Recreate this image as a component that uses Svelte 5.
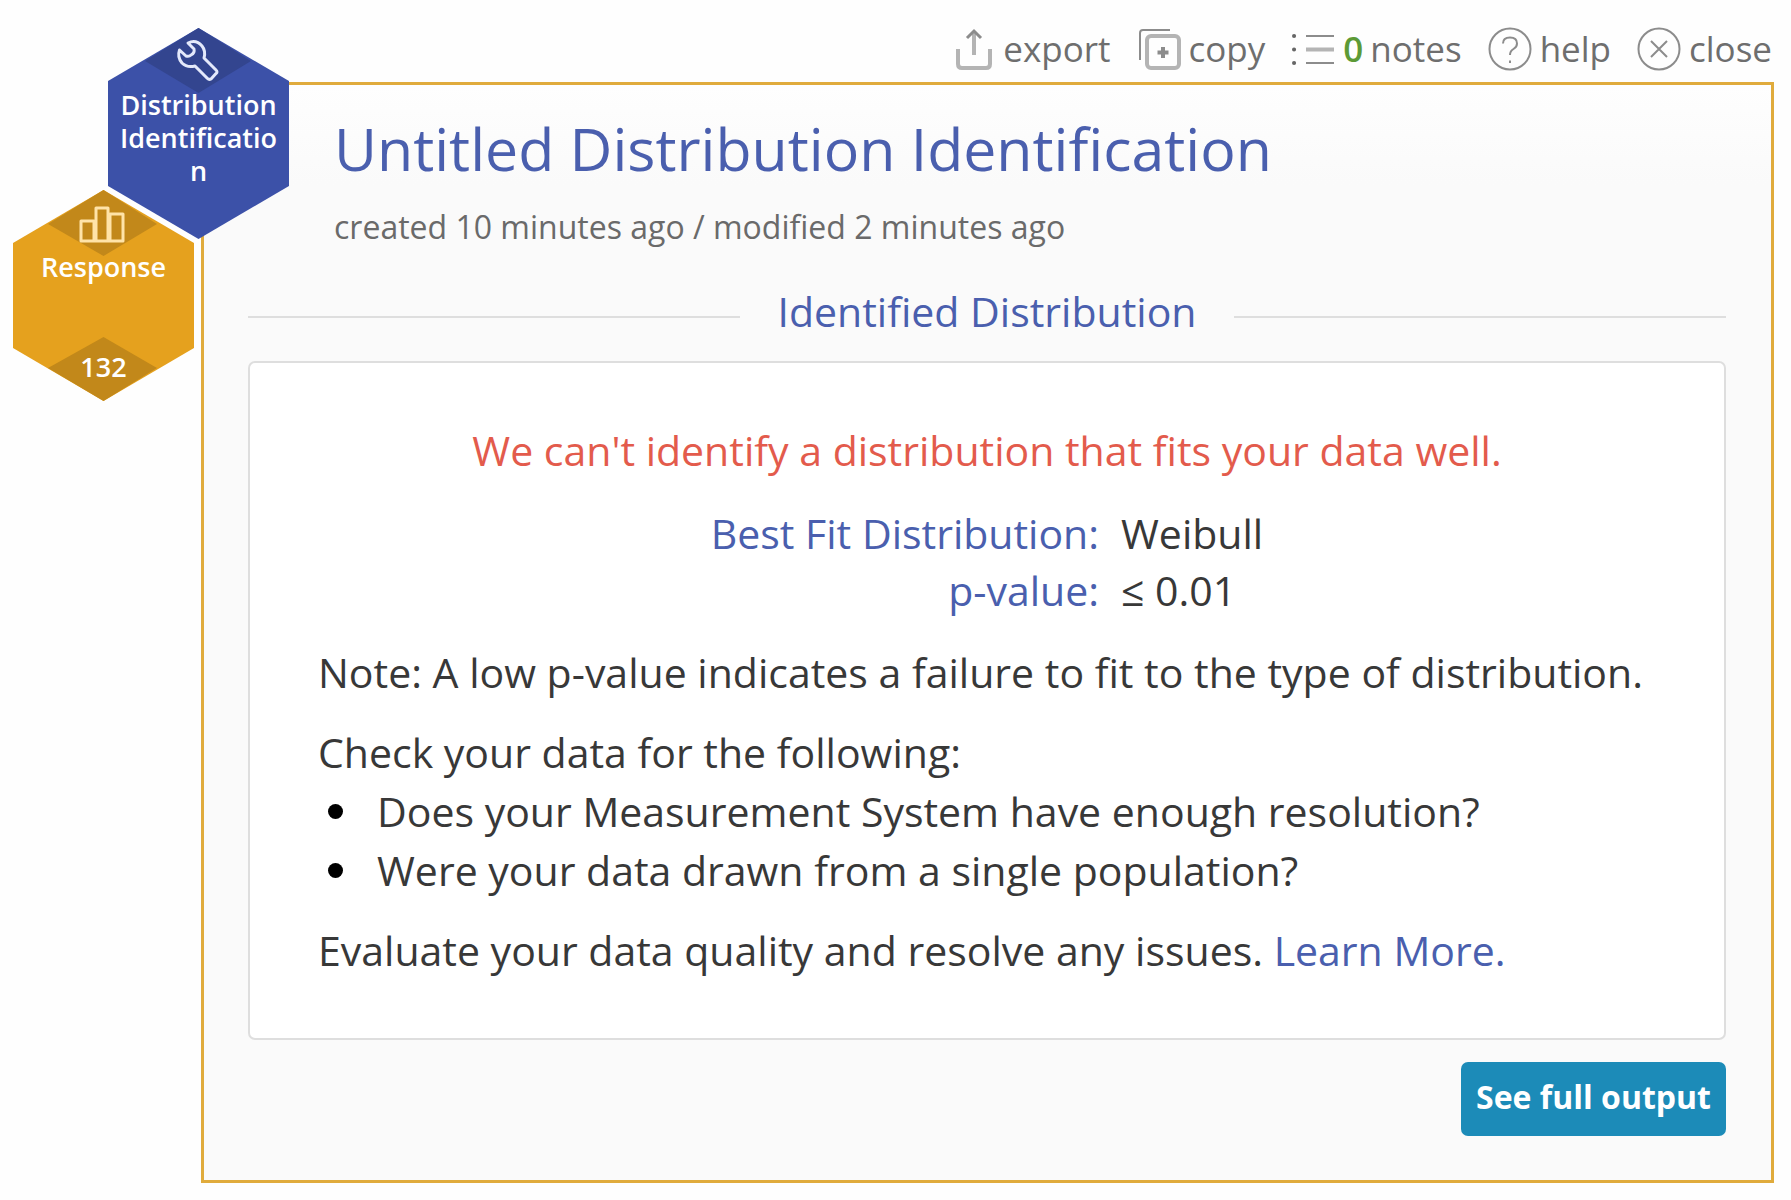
<script lang="ts">
	const tools = [
		{ id: 'export', label: 'export' },
		{ id: 'copy', label: 'copy' },
		{ id: 'notes', label: 'notes', count: 0 },
		{ id: 'help', label: 'help' },
		{ id: 'close', label: 'close' }
	];

	const results = [
		{ name: 'Best Fit Distribution:', value: 'Weibull' },
		{ name: 'p-value:', value: '≤ 0.01' }
	];

	const checks = [
		'Does your Measurement System have enough resolution?',
		'Were your data drawn from a single population?'
	];
</script>

<div class="page">
	<nav class="toolbar">
		{#each tools as tool (tool.id)}
			<button type="button" class="tool">
				<svg class="tool-icon" viewBox="0 0 44 44" aria-hidden="true">
					{#if tool.id === 'export'}
						<path class="soft" d="M7 22v15q0 4 4 4h24q4 0 4-4V22M23 28V5" />
						<path class="head" d="M16 11l7-7 7 7" />
					{:else if tool.id === 'copy'}
						<path d="M3 33V6q0-3 3-3h27" />
						<rect class="soft" x="10" y="9" width="32" height="32" rx="4" />
						<path class="plus" d="M26 20v11M20.500 25.500h11" />
					{:else if tool.id === 'notes'}
						<path d="M15 9h28M15 36h28" />
						<path class="soft" d="M15 22.500h28" />
						<path class="dots" d="M3 9h.1M3 22.500h.1M3 36h.1" />
					{:else if tool.id === 'help'}
						<circle cx="22" cy="22" r="20.500" />
						<path d="M15 16.500q0-6 7-6t7 6q0 3.500-3.500 5.500-3.500 2-3.500 6M22 33.500v2.500" />
					{:else}
						<circle cx="22" cy="22" r="20.500" />
						<path d="M14 14l16 16M30 14L14 30" />
					{/if}
				</svg>
				<span class="tool-label">
					{#if tool.count !== undefined}<b>{tool.count}</b>{/if}
					{tool.label}
				</span>
			</button>
		{/each}
	</nav>

	<aside class="badges">
		<div class="hex hex-tool">
			<svg class="hex-shape" viewBox="0 0 181 211" aria-hidden="true">
				<path class="fill" d="M90.500 0L181 53v105l-90.500 53L0 158V53z" />
				<path class="shade" d="M90.500 0L143 33 90.500 65 37 33z" />
				<path
					class="glyph"
					d="M80 15q8-4 14 3 4 5 2 12l12 12q2 2 0 3.500l-5 5.500q-2 1-3.500-.5L87 38q-8 2-13-3-5-6-2.500-13l6.500 6q3 1 5-1 4-2 3-6z"
				/>
			</svg>
			<span class="hex-label">Distribution Identification</span>
		</div>
		<div class="hex hex-data">
			<svg class="hex-shape" viewBox="0 0 181 211" aria-hidden="true">
				<path class="fill" d="M90.500 0L181 53v105l-90.500 53L0 158V53z" />
				<path class="shade" d="M90.500 0L144 34 90.500 66 35 34z" />
				<path class="shade" d="M90.500 147L144 178l-53.500 33L35 178z" />
				<path class="glyph" d="M68 31h13v20H68zM83 18h12v33H83zM97 24h13v27H97z" />
			</svg>
			<span class="hex-label">Response</span>
			<span class="hex-count">132</span>
		</div>
	</aside>

	<main class="card">
		<header>
			<h1>Untitled Distribution Identification</h1>
			<p class="dates">created 10 minutes ago / modified 2 minutes ago</p>
		</header>

		<h2>Identified Distribution</h2>

		<section class="panel">
			<p class="warning">We can't identify a distribution that fits your data well.</p>
			<table>
				<tbody>
					{#each results as row (row.name)}
						<tr>
							<th scope="row">{row.name}</th>
							<td>{row.value}</td>
						</tr>
					{/each}
				</tbody>
			</table>
			<p>Note: A low p-value indicates a failure to fit to the type of distribution.</p>
			<p>Check your data for the following:</p>
			<ul>
				{#each checks as check (check)}
					<li>{check}</li>
				{/each}
			</ul>
			<p>Evaluate your data quality and resolve any issues. <a href="#learn">Learn More.</a></p>
		</section>

		<div class="actions">
			<button type="button" class="primary">See full output</button>
		</div>
	</main>
</div>

<style>
	:global(body) {
		margin: 0;
		background: #fefefe;
	}

	.page {
		position: relative;
		padding: 27px 17px 17px 201px;
		font-family: 'Open Sans', 'Noto Sans', sans-serif;
		color: #383838;
	}

	h1,
	h2,
	p,
	ul {
		margin: 0;
		padding: 0;
		font-weight: 400;
	}

	button {
		border: 0;
		font-family: inherit;
		cursor: pointer;
	}

	.toolbar {
		display: flex;
		justify-content: flex-end;
		gap: 26px;
		padding: 0 2px 11px 0;
	}

	.tool {
		display: flex;
		align-items: center;
		gap: 8px;
		padding: 0;
		background: none;
		color: #6e6e6e;
		font-size: 35px;
		line-height: 44px;
	}

	.tool-icon {
		width: 44px;
		height: 44px;
		fill: none;
		stroke: #8c8c8c;
		stroke-width: 2;
	}

	.tool-icon .soft {
		stroke: #b4b4b4;
		stroke-width: 4;
	}

	.tool-icon .head {
		stroke-width: 3;
	}

	.tool-icon .plus {
		stroke-width: 4;
	}

	.tool-icon .dots {
		stroke: #666;
		stroke-width: 4;
		stroke-linecap: round;
	}

	.tool-label {
		display: flex;
		gap: 7px;
	}

	.tool-label b {
		color: #5c9a36;
		font-weight: 600;
	}

	/* badges hang over the card's top left corner */
	.badges {
		position: absolute;
		top: 28px;
		left: 13px;
		display: flex;
		flex-direction: column;
		width: 276px;
	}

	.hex {
		position: relative;
		display: flex;
		flex-direction: column;
		align-items: center;
		box-sizing: border-box;
		width: 181px;
		height: 211px;
		padding-top: 60px;
		color: #fff;
		font-size: 27px;
		font-weight: 600;
		line-height: 33px;
		text-align: center;
	}

	.hex-tool {
		z-index: 1;
		align-self: flex-end;
	}

	.hex-data {
		margin-top: -49px;
	}

	.hex-shape {
		position: absolute;
		top: 0;
		left: 0;
		width: 100%;
		height: 100%;
		overflow: visible;
	}

	.hex-tool .fill {
		fill: #3c51a8;
	}

	.hex-tool .shade {
		fill: #33458f;
	}

	.hex-data .fill {
		fill: #e5a11e;
	}

	.hex-data .shade {
		fill: #c2881a;
	}

	.glyph {
		fill: none;
		stroke: #e4e9fb;
		stroke-width: 3;
		stroke-linejoin: round;
	}

	.hex-data .glyph {
		stroke: #ffe3a8;
	}

	.hex-label,
	.hex-count {
		position: relative;
		width: 164px;
		overflow-wrap: anywhere;
	}

	.hex-count {
		margin-top: 67px;
	}

	.card {
		padding: 28px 45px 44px 44px;
		border: 3px solid #e0ab3c;
		background: linear-gradient(#fefefe, #fafafa 100px);
	}

	header {
		padding-left: 86px;
	}

	h1 {
		color: #4a5fae;
		font-size: 59px;
		line-height: 70px;
	}

	.dates {
		margin-top: 22px;
		color: #6a6a6a;
		font-size: 32px;
		line-height: 44px;
	}

	h2 {
		display: flex;
		align-items: center;
		gap: 38px;
		margin: 34px 0 22px;
		color: #4a5fae;
		font-size: 41px;
		line-height: 56px;
	}

	h2::before,
	h2::after {
		content: '';
		flex: 1;
		height: 2px;
		margin-top: 12px;
		background: #dedede;
	}

	.panel {
		padding: 58px 68px;
		border: 2px solid #dedede;
		border-radius: 7px;
		background: #fff;
		font-size: 41px;
		line-height: 59px;
	}

	.panel p + p,
	.panel ul + p {
		margin-top: 21px;
	}

	.warning {
		color: #e35b4c;
		text-align: center;
	}

	table {
		margin: 25px auto 24px;
		border-collapse: collapse;
		line-height: 57px;
	}

	th,
	td {
		padding: 0;
		font-weight: 400;
		text-align: left;
	}

	th {
		padding-right: 22px;
		color: #4a5fae;
		text-align: right;
	}

	ul {
		list-style: none;
	}

	li {
		display: flex;
		align-items: center;
		gap: 34px;
		padding-left: 10px;
	}

	li::before {
		content: '';
		flex: none;
		width: 15px;
		height: 15px;
		border-radius: 50%;
		background: #000;
	}

	a {
		color: #4a5fae;
		text-decoration: none;
	}

	.actions {
		display: flex;
		justify-content: flex-end;
		margin-top: 22px;
	}

	.primary {
		padding: 14px 15px 18px;
		border-radius: 7px;
		background: #1c8bb8;
		color: #fff;
		font-size: 32px;
		font-weight: 700;
		line-height: 42px;
	}
</style>
